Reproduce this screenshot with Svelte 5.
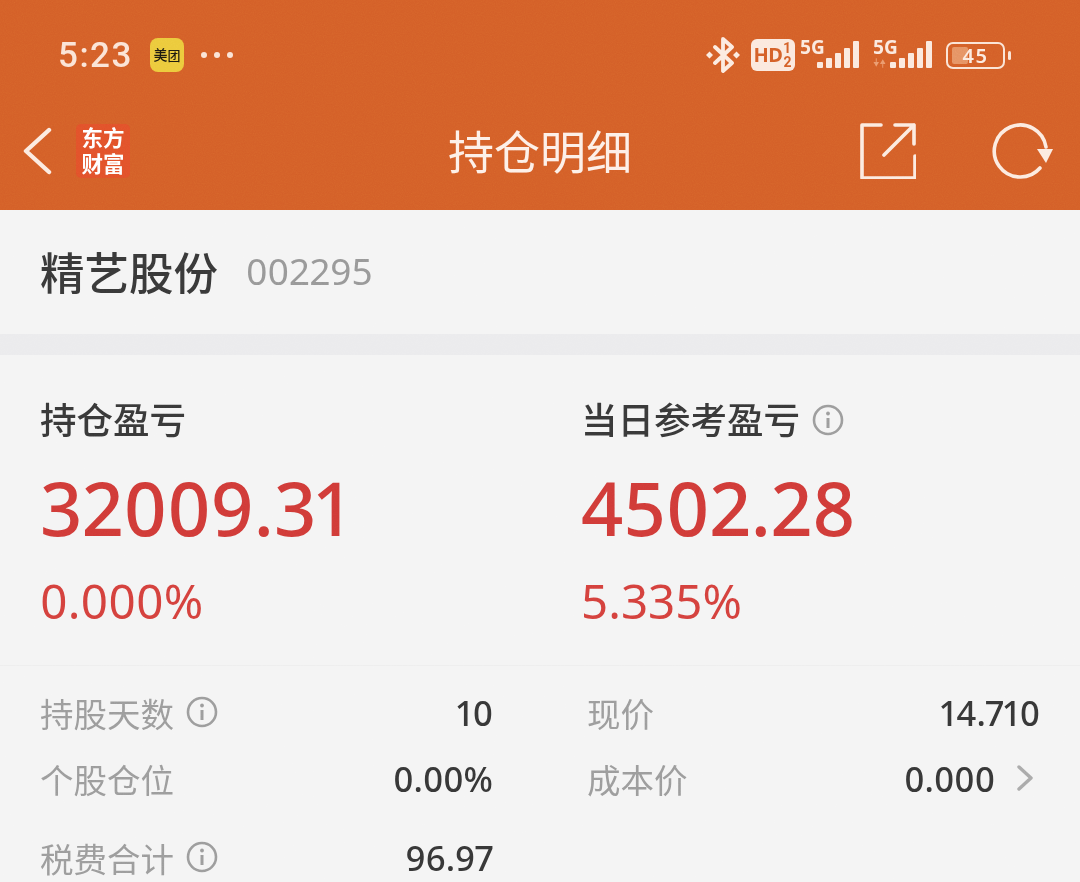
<script lang="ts">
  const pnl = [
    { label: '持仓盈亏', value: '32009.31', pct: '0.000%', info: false },
    { label: '当日参考盈亏', value: '4502.28', pct: '5.335%', info: true }
  ]
  const left = [
    { label: '持股天数', value: '10', info: true },
    { label: '个股仓位', value: '0.00%', info: false },
    { label: '税费合计', value: '96.97', info: true }
  ]
  const right = [
    { label: '现价', value: '14.710', more: false },
    { label: '成本价', value: '0.000', more: true }
  ]
  const barHeights = [6, 10, 15, 20, 27]
</script>

{#snippet infoIcon()}
  <svg class="info" viewBox="0 0 32 32" fill="none" stroke="currentColor">
    <circle cx="16" cy="16" r="14" stroke-width="2.6" />
    <path d="M16 14v10" stroke-width="3" />
    <circle cx="16" cy="9.5" r="1.9" fill="currentColor" stroke="none" />
  </svg>
{/snippet}

{#snippet bars()}
  <span class="bars">
    {#each barHeights as h}
      <i style="height:{h}px"></i>
    {/each}
  </span>
{/snippet}

<div class="page">
  <header class="head">
    <div class="status">
      <div class="status-left">
        <span class="time">5:23</span>
        <span class="app-badge">美<span class="tuan">团</span></span>
        <span class="dots"><i></i><i></i><i></i></span>
      </div>
      <div class="status-right">
        <svg class="bt" viewBox="0 0 34 36" fill="none" stroke="currentColor" stroke-width="3.800" stroke-linejoin="round" stroke-linecap="round">
          <path d="M9 10l17 16-9 8V2l9 8L9 26" />
          <path d="M3.500 14.500L7 18l-3.500 3.500L0 18zM30.500 14.500L34 18l-3.500 3.500L27 18z" fill="currentColor" stroke="none" />
        </svg>
        <span class="hd">HD<span class="frac">12</span></span>
        <span class="signal">
          <span class="net">5G</span>
          {@render bars()}
        </span>
        <span class="signal">
          <span class="net">5G</span>
          <svg class="updown" viewBox="0 0 14 10" fill="currentColor"><path d="M4 0v4h2.500L3.500 9 0.500 4H3V0zM10 10V6H7.500l3-5 3 5H11v4z" /></svg>
          {@render bars()}
        </span>
        <span class="battery">
          <span class="cell"><span class="level"></span><span class="pct">45</span></span>
          <span class="tip"></span>
        </span>
      </div>
    </div>

    <nav class="nav">
      <div class="nav-left">
        <svg class="back" viewBox="0 0 30 48" fill="none" stroke="currentColor" stroke-width="4.400" stroke-linecap="round" stroke-linejoin="round">
          <path d="M27 3L4 24l23 21" />
        </svg>
        <span class="logo"><span class="logo-text">东方财富</span></span>
      </div>
      <h1>持仓明细</h1>
      <div class="nav-right">
        <svg class="share" viewBox="0 0 56 56" fill="none" stroke="currentColor" stroke-width="3.600" stroke-linecap="round" stroke-linejoin="round">
          <path d="M21 2H2v53h53V33" />
          <path d="M24 32L54 2M35 2h19v19" />
        </svg>
        <svg class="refresh" viewBox="0 0 64 60" fill="none" stroke="currentColor" stroke-width="3.600" stroke-linecap="round">
          <path d="M50 47A26 26 0 1 1 56 26" />
          <path d="M47 28h16l-7 14z" fill="currentColor" stroke="none" />
        </svg>
      </div>
    </nav>
  </header>

  <section class="stock">
    <span class="name">精艺股份</span>
    <span class="code">002295</span>
  </section>

  <div class="band"></div>

  <section class="pnl">
    {#each pnl as item}
      <div class="pnl-col">
        <div class="pnl-label">
          {item.label}
          {#if item.info}{@render infoIcon()}{/if}
        </div>
        <div class="pnl-value">{item.value}</div>
        <div class="pnl-pct">{item.pct}</div>
      </div>
    {/each}
  </section>

  <section class="details">
    <div class="col">
      {#each left as row}
        <div class="row">
          <span class="label">{row.label}{#if row.info}{@render infoIcon()}{/if}</span>
          <span class="value">{row.value}</span>
        </div>
      {/each}
    </div>
    <div class="col">
      {#each right as row}
        <div class="row">
          <span class="label">{row.label}</span>
          <span class="value">
            {row.value}
            {#if row.more}
              <svg class="chevron" viewBox="0 0 16 26" fill="none" stroke="currentColor" stroke-width="3.400" stroke-linecap="round" stroke-linejoin="round">
                <path d="M2 2l12 11L2 24" />
              </svg>
            {/if}
          </span>
        </div>
      {/each}
    </div>
  </section>

  <!-- photo grain over the whole screenshot -->
  <svg class="grain" width="1080" height="882" aria-hidden="true">
    <filter id="grain-noise">
      <feTurbulence type="fractalNoise" baseFrequency="0.9" numOctaves="2" seed="4" />
      <feColorMatrix type="saturate" values="0" />
    </filter>
    <rect width="1080" height="882" filter="url(#grain-noise)" />
  </svg>
</div>

<style>
  :global(body) {
    background: #f3f3f3;
  }

  .page {
    position: relative;
    width: 1080px;
    height: 882px;
    overflow: hidden;
    font-family: 'Noto Sans', 'Noto Sans CJK SC', sans-serif;
    font-variant-numeric: proportional-nums;
    color: #363636;
    background: #f4f4f4;
  }

  .grain {
    position: absolute;
    inset: 0;
    opacity: 0.16;
    mix-blend-mode: overlay;
    pointer-events: none;
  }

  .head {
    height: 210px;
    background: #d45f28;
    color: #fcebe0;
  }

  .status {
    height: 105px;
    padding: 29px 69px 0 58px;
    box-sizing: border-box;
    display: flex;
    justify-content: space-between;
    align-items: flex-start;
  }

  .status-left {
    display: flex;
    align-items: center;
    height: 52px;
  }

  .time {
    font-family: Roboto, sans-serif;
    font-size: 35px;
    font-weight: 500;
    letter-spacing: 1.500px;
    color: #fbe4d6;
    width: 92px;
  }

  .app-badge {
    width: 34px;
    height: 34px;
    border-radius: 8px;
    background: #ecca3c;
    color: #1d1a10;
    font-size: 14px;
    font-weight: 500;
    line-height: 34px;
    display: flex;
    justify-content: center;
    align-items: center;
  }

  .tuan {
    font-size: 13px;
  }

  .dots {
    display: flex;
    gap: 7px;
    margin-left: 17px;
  }

  .dots i {
    width: 6px;
    height: 6px;
    border-radius: 50%;
    background: #fbe4d6;
  }

  .status-right {
    display: flex;
    align-items: center;
    height: 52px;
  }

  .bt {
    width: 34px;
    height: 36px;
  }

  .hd {
    margin-left: 11px;
    width: 44px;
    height: 32px;
    border-radius: 6px;
    background: #fbe9de;
    color: #d45f28;
    font-size: 20px;
    font-weight: 700;
    line-height: 32px;
    display: flex;
    justify-content: center;
    letter-spacing: -0.5px;
  }

  /* one over two: a narrow box breaks the pair on two lines */
  .frac {
    width: 9px;
    margin: 2px 0 0 1px;
    font-family: Roboto, sans-serif;
    font-size: 14px;
    line-height: 14px;
    letter-spacing: 0;
    word-break: break-all;
  }

  .signal {
    position: relative;
    display: flex;
    justify-content: flex-end;
    align-items: flex-end;
    width: 59px;
    height: 26px;
    margin-left: 14px;
    color: #fbe9de;
  }

  .hd + .signal {
    margin-left: 5px;
  }

  .net {
    position: absolute;
    left: 0;
    top: -5px;
    font-size: 19px;
    font-weight: 700;
    line-height: 20px;
  }

  .updown {
    position: absolute;
    left: 0;
    bottom: 0;
    width: 13px;
    height: 10px;
    color: #eb9a6e;
  }

  .bars {
    display: flex;
    align-items: flex-end;
    gap: 3px;
    height: 27px;
  }

  .bars i {
    width: 6px;
    border-radius: 1px;
    background: currentColor;
  }

  .battery {
    margin-left: 14px;
    display: flex;
    align-items: center;
  }

  .cell {
    position: relative;
    box-sizing: border-box;
    width: 59px;
    height: 27px;
    border: 2px solid #fbe4d6;
    border-radius: 7px;
    display: flex;
    justify-content: center;
    align-items: center;
    overflow: hidden;
  }

  .level {
    position: absolute;
    left: 4px;
    top: 3px;
    bottom: 3px;
    width: 16px;
    border-radius: 2px;
    background: #e69364;
  }

  .pct {
    position: relative;
    font-size: 20px;
    font-weight: 600;
    line-height: 23px;
    letter-spacing: 1.500px;
  }

  .tip {
    width: 3px;
    height: 9px;
    border-radius: 2px;
    margin-left: 3px;
    background: #fbe4d6;
  }

  .nav {
    position: relative;
    height: 105px;
    box-sizing: border-box;
    display: flex;
    justify-content: space-between;
    align-items: center;
    padding: 0 26px 13px 22px;
  }

  .nav-left,
  .nav-right {
    display: flex;
    align-items: center;
  }

  .back {
    width: 30px;
    height: 48px;
  }

  .logo {
    margin-left: 24px;
    width: 54px;
    height: 54px;
    border-radius: 5px;
    background: #e2512a;
    color: #fff;
    display: flex;
    align-items: center;
    justify-content: center;
  }

  .logo-text {
    width: 44px;
    font-size: 21.500px;
    font-weight: 700;
    line-height: 26px;
    text-align: center;
  }

  h1 {
    position: absolute;
    left: 0;
    right: 0;
    top: 0;
    margin: 0;
    text-align: center;
    font-size: 46px;
    font-weight: 400;
    line-height: 92px;
    color: #fdf0e8;
  }

  .share {
    width: 56px;
    height: 56px;
  }

  .refresh {
    margin-left: 74px;
    width: 64px;
    height: 60px;
  }

  .stock {
    height: 124px;
    box-sizing: border-box;
    padding: 0 40px 4px;
    display: flex;
    align-items: center;
    gap: 28px;
  }

  .name {
    font-size: 44.500px;
    font-weight: 500;
    color: #383838;
  }

  .code {
    font-size: 37px;
    color: #979797;
  }

  .band {
    height: 21px;
    background: #ebebed;
  }

  .pnl {
    display: grid;
    grid-template-columns: 541px 1fr;
    padding: 40px 40px 0;
    height: 311px;
    box-sizing: border-box;
    border-bottom: 1px solid #eeeeee;
  }

  .pnl-label {
    display: flex;
    align-items: center;
    gap: 12px;
    height: 50px;
    font-size: 36.500px;
    font-weight: 500;
    color: #383838;
    line-height: 50px;
  }

  .pnl-value {
    margin-top: 18px;
    font-size: 74px;
    font-weight: 500;
    line-height: 90px;
    color: #d03a37;
  }

  .pnl-pct {
    margin-top: 18px;
    font-size: 47.500px;
    line-height: 60px;
    color: #d4403c;
  }

  .details {
    display: grid;
    grid-template-columns: 453px 453px;
    column-gap: 94px;
    padding: 13px 40px 0;
  }

  .row {
    display: flex;
    justify-content: space-between;
    align-items: center;
    height: 66px;
  }

  .col .row:nth-child(3) {
    margin-top: 13px;
  }

  .label {
    display: flex;
    align-items: center;
    gap: 12px;
    font-size: 33.500px;
    color: #9b9b9b;
  }

  .value {
    display: flex;
    align-items: center;
    font-size: 34.500px;
    font-weight: 500;
    color: #363636;
  }

  .info {
    width: 32px;
    height: 32px;
    color: #9b9b9b;
  }

  .chevron {
    width: 16px;
    height: 26px;
    margin: 0 7px 0 22px;
    color: #a9a9a9;
  }
</style>
